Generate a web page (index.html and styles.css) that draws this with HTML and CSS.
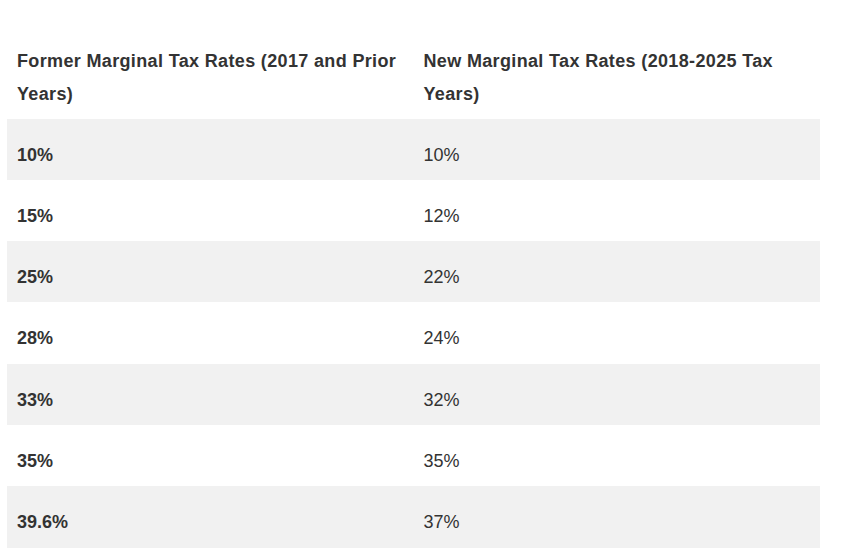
FILE: index.html
```html
<!DOCTYPE html>
<html>
<head>
<meta charset="utf-8">
<link rel="stylesheet" href="styles.css">
</head>
<body>
<table class="rates">
  <thead>
    <tr>
      <th>Former Marginal Tax Rates (2017 and Prior Years)</th>
      <th>New Marginal Tax Rates (2018-2025 Tax Years)</th>
    </tr>
  </thead>
  <tbody>
    <tr><td class="old">10%</td><td>10%</td></tr>
    <tr><td class="old">15%</td><td>12%</td></tr>
    <tr><td class="old">25%</td><td>22%</td></tr>
    <tr><td class="old">28%</td><td>24%</td></tr>
    <tr><td class="old">33%</td><td>32%</td></tr>
    <tr><td class="old">35%</td><td>35%</td></tr>
    <tr><td class="old">39.6%</td><td>37%</td></tr>
  </tbody>
</table>
</body>
</html>
```
FILE: styles.css
```css
html, body {
  margin: 0;
  padding: 0;
  background: #ffffff;
}
body {
  padding: 24px 43px 0 7px;
  font-family: "Liberation Sans", Arial, sans-serif;
  color: #333333;
  font-size: 18px;
}
.rates {
  width: 813px;
  border-collapse: collapse;
  table-layout: fixed;
}
.rates th,
.rates td {
  text-align: left;
  vertical-align: top;
  padding: 20px 10px 8px 10px;
  line-height: 33.3px;
  font-size: 18px;
}
.rates th {
  font-weight: bold;
  letter-spacing: 0.35px;
  padding-top: 21px;
  padding-bottom: 7px;
}
.rates td.old {
  font-weight: bold;
}
.rates tbody tr:nth-child(odd) {
  background: #f1f1f1;
}
```
